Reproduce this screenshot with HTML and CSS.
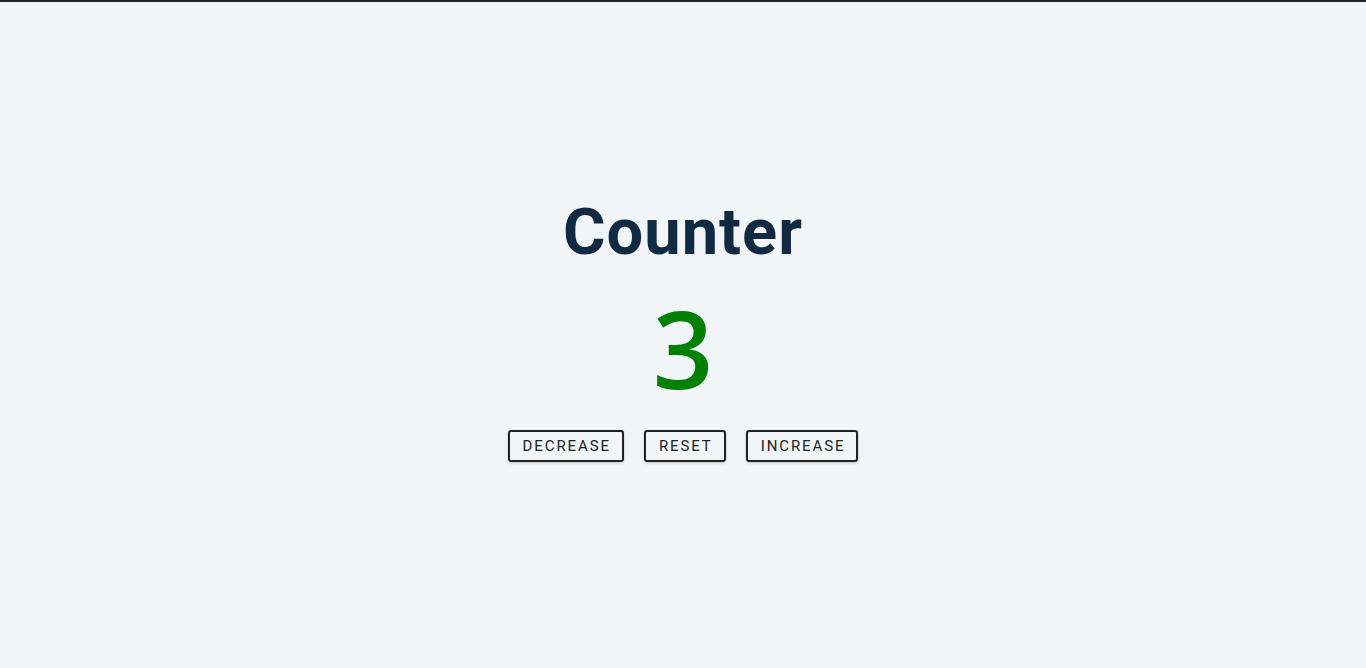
FILE: index.html
```html
<!DOCTYPE html>
<html>
<head>
<meta charset="utf-8">
<link rel="stylesheet" href="styles.css">
</head>
<body>
<main class="page">
  <h1 class="title">Counter</h1>
  <span class="value">3</span>
  <div class="controls">
    <button class="btn">decrease</button>
    <button class="btn">reset</button>
    <button class="btn">increase</button>
  </div>
</main>
</body>
</html>
```
FILE: styles.css
```css
html, body {
  margin: 0;
  padding: 0;
}
body {
  background: #f1f5f8;
  border-top: 2px solid #222;
  font-family: Roboto, "Liberation Sans", sans-serif;
  height: 666px;
  overflow: hidden;
}
.page {
  box-sizing: border-box;
  height: 100%;
  padding-bottom: 8px;
  display: flex;
  flex-direction: column;
  align-items: center;
  justify-content: center;
}
.title {
  margin: 0;
  font-family: Roboto, sans-serif;
  font-weight: 700;
  font-size: 65px;
  line-height: 1;
  color: #102a43;
  letter-spacing: 1px;
}
.value {
  display: block;
  font-family: "Open Sans", sans-serif;
  font-weight: 600;
  font-size: 106px;
  line-height: 1.2;
  color: #008000;
  margin-top: 20px;
}
.controls {
  display: flex;
  gap: 20px;
  margin-top: 18px;
}
.btn {
  font-family: Roboto, sans-serif;
  text-transform: uppercase;
  font-size: 15px;
  letter-spacing: 1.9px;
  color: #222;
  background: transparent;
  border: 2px solid #222;
  border-radius: 3px;
  padding: 0 11px 0 13px;
  height: 32px;
  box-shadow: 0 1px 3px rgba(0,0,0,0.2);
}
```
